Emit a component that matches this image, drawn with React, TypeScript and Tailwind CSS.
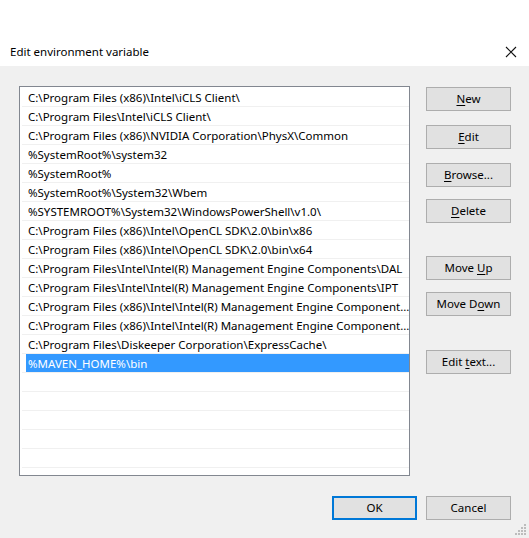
import { Fragment } from "react";

const paths = [
    "C:\\Program Files (x86)\\Intel\\iCLS Client\\",
    "C:\\Program Files\\Intel\\iCLS Client\\",
    "C:\\Program Files (x86)\\NVIDIA Corporation\\PhysX\\Common",
    "%SystemRoot%\\system32",
    "%SystemRoot%",
    "%SystemRoot%\\System32\\Wbem",
    "%SYSTEMROOT%\\System32\\WindowsPowerShell\\v1.0\\",
    "C:\\Program Files (x86)\\Intel\\OpenCL SDK\\2.0\\bin\\x86",
    "C:\\Program Files (x86)\\Intel\\OpenCL SDK\\2.0\\bin\\x64",
    "C:\\Program Files\\Intel\\Intel(R) Management Engine Components\\DAL",
    "C:\\Program Files\\Intel\\Intel(R) Management Engine Components\\IPT",
    "C:\\Program Files (x86)\\Intel\\Intel(R) Management Engine Component...",
    "C:\\Program Files (x86)\\Intel\\Intel(R) Management Engine Component...",
    "C:\\Program Files\\Diskeeper Corporation\\ExpressCache\\",
    "%MAVEN_HOME%\\bin",
    "",
    "",
    "",
    "",
    "",
    "",
];

const selected = 14;

// label split around the access-key letter
const WinButton = ({ pre, key_, post, primary = false }: { pre: string; key_: string; post: string; primary?: boolean }) => (
    <button
        className={`h-[24px] w-[85px] bg-[#e1e1e1] text-[11.5px] text-black leading-none ${primary ? "border-2 border-[#0078d7]" : "border border-[#adadad]"}`}
    >
        {pre}
        <span className="underline underline-offset-2">{key_}</span>
        {post}
    </button>
);

const App = () => {
    return (
        <div className="w-[529px] h-[538px] bg-white text-black" style={{ fontFamily: '"Segoe UI", "Noto Sans", "Open Sans", sans-serif' }}>
            {/* title bar */}
            <div className="h-[66px] flex items-end pb-[6px] pl-[10px] pr-[12px] justify-between bg-white">
                <span className="text-[11.5px] leading-[16px]">Edit environment variable</span>
                <svg width="12" height="12" viewBox="0 0 12 12" className="mb-[2px]">
                    <path d="M1 1 L11 11 M11 1 L1 11" stroke="#111" strokeWidth="1.1" />
                </svg>
            </div>

            <div className="relative h-[472px] bg-[#f0f0f0] pl-[19px] pt-[20px]">
                <div className="flex gap-[16px]">
                    {/* path list */}
                    <div className="h-[390px] w-[391px] overflow-hidden border border-[#828790] bg-white pt-px pl-px">
                        {paths.map((p, i) => (
                            <Fragment key={i}>
                                <div className="h-[19px] w-[387px] ml-px border-b border-[#f0f0f0]">
                                    <div
                                        className={`ml-[4px] h-[18px] pl-[2px] text-[11.5px] leading-[19px] whitespace-nowrap ${i === selected ? "bg-[#3399ff] text-white" : ""}`}
                                    >
                                        {p}
                                    </div>
                                </div>
                            </Fragment>
                        ))}
                    </div>

                    {/* action buttons */}
                    <div className="flex flex-col pt-px">
                        <WinButton pre="" key_="N" post="ew" />
                        <div className="h-[14px]" />
                        <WinButton pre="" key_="E" post="dit" />
                        <div className="h-[14px]" />
                        <WinButton pre="" key_="B" post="rowse..." />
                        <div className="h-[12px]" />
                        <WinButton pre="" key_="D" post="elete" />
                        <div className="h-[33px]" />
                        <WinButton pre="Move " key_="U" post="p" />
                        <div className="h-[12px]" />
                        <WinButton pre="Move D" key_="o" post="wn" />
                        <div className="h-[34px]" />
                        <WinButton pre="Edit " key_="t" post="ext..." />
                    </div>
                </div>

                <div className="flex justify-end gap-[9px] pr-[18px] mt-[20px]">
                    <WinButton pre="OK" key_="" post="" primary />
                    <WinButton pre="Cancel" key_="" post="" />
                </div>

                {/* resize grip */}
                <svg width="12" height="12" viewBox="0 0 12 12" className="absolute right-[2px] bottom-[2px]">
                    {[
                        [9, 0], [6, 3], [9, 3], [3, 6], [6, 6], [9, 6], [0, 9], [3, 9], [6, 9], [9, 9],
                    ].map(([x, y], i) => (
                        <rect key={i} x={x} y={y} width="2" height="2" fill="#bcbcbc" />
                    ))}
                </svg>
            </div>
        </div>
    );
};

export default App;
